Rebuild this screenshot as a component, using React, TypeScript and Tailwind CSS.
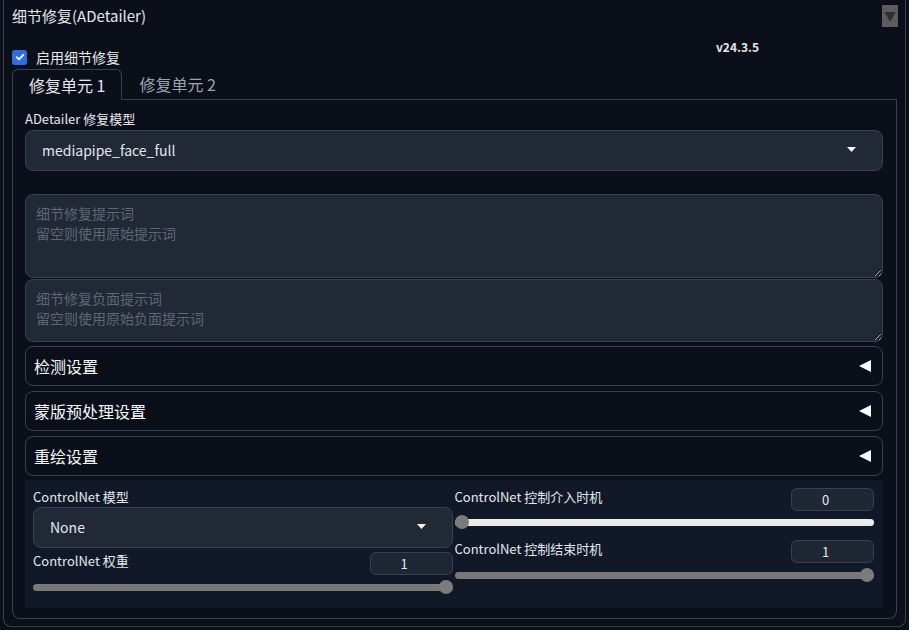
const font = "font-['Noto_Sans_CJK_SC','Noto_Sans',sans-serif]";

function Caret() {
  return (
    <svg width="9" height="5" viewBox="0 0 9 5" className="shrink-0">
      <polygon points="0,0 9,0 4.5,5" fill="#f3f4f6" />
    </svg>
  );
}

function LeftTriangle() {
  return (
    <svg width="12" height="12" viewBox="0 0 12 12" className="shrink-0">
      <polygon points="12,0 12,12 0,6" fill="#f9fafb" />
    </svg>
  );
}

function Select({ value, caretRight }: { value: string; caretRight: string }) {
  return (
    <div className="flex h-[41px] items-center justify-between rounded-lg border border-[#374151] bg-[#212836] pb-[2px] pl-[16px]">
      <span className="text-[14px] leading-[18px] text-[#e5e7eb]">{value}</span>
      <span className={caretRight}>
        <Caret />
      </span>
    </div>
  );
}

function NumberBox({ value }: { value: string }) {
  return (
    <div className="flex h-[23px] w-[83px] items-center justify-center rounded-md border border-[#374151] bg-[#1f2634] pr-[14px] text-[13px] text-[#e5e7eb]">
      {value}
    </div>
  );
}

function Slider({ value, light }: { value: number; light?: boolean }) {
  return (
    <div className="relative h-[14px] w-full">
      <div
        className={`absolute left-0 right-0 top-[3.5px] h-[7px] rounded-full ${
          light ? "bg-[#ececec]" : "bg-[#787878]"
        }`}
      />
      <div
        className="absolute top-0 h-[14px] w-[14px] rounded-full bg-[#7b7b7b]"
        style={{ left: `calc(${value * 100}% - ${value * 14}px)` }}
      />
    </div>
  );
}

function Accordion({ title }: { title: string }) {
  return (
    <div className="flex h-[40px] items-center justify-between rounded-lg border border-[#374151] pl-[8px] pr-[11px]">
      <span className="text-[16px] font-normal text-[#f9fafb]">{title}</span>
      <LeftTriangle />
    </div>
  );
}

export default function App() {
  return (
    <div className={`h-[630px] w-[909px] overflow-hidden bg-[#0b0f19] ${font}`}>
      <div className="mx-[3px] h-[627px] rounded-b-lg border-x border-b border-[#374151] pt-[5px]">
        <div className="flex items-start justify-between pl-[8px] pr-[7px]">
          <span className="mt-[1px] text-[15px] leading-[20px] text-[#e5e7eb]">
            细节修复(ADetailer)
          </span>
          <div className="flex h-[22px] w-[16px] items-center justify-center bg-[#5c5c5c] text-[12px] text-[#2f2f2f]">
            ▼
          </div>
        </div>

        <div className="mt-[13px] flex items-start pl-[8px]">
          <label className="mt-[9px] flex items-center gap-[9px]">
            <span className="flex h-[15px] w-[15px] items-center justify-center rounded-[3px] bg-[#2f6de1]">
              <svg width="10" height="10" viewBox="0 0 10 10">
                <path d="M1.8 5.2 L4 7.3 L8.3 2.8" stroke="#fff" strokeWidth="1.8" fill="none" strokeLinecap="round" strokeLinejoin="round" />
              </svg>
            </span>
            <span className="text-[14px] leading-[16px] text-[#e5e7eb]">启用细节修复</span>
          </label>
          <span className="ml-auto mr-[146px] text-[12px] font-bold leading-[14px] text-[#e5e7eb]">
            v24.3.5
          </span>
        </div>

        <div className="mx-[8px] mt-[4px] flex h-[31px]">
          <div className="flex items-center rounded-t-md border border-b-0 border-[#374151] px-[16px] text-[16px] text-[#e5e7eb]">
            修复单元 1
          </div>
          <div className="flex flex-1 items-center border-b border-[#374151] pl-[17px] text-[16px] text-[#9ca3af]">
            修复单元 2
          </div>
        </div>

        <div className="mx-[8px] rounded-b-lg border-x border-b border-[#374151] pb-[10px] pl-[12px] pr-[13px] pt-[11px]">
          <div className="text-[13px] leading-[16px] text-[#e5e7eb]">ADetailer 修复模型</div>
          <div className="mt-[3px]">
            <Select value="mediapipe_face_full" caretRight="mr-[26px]" />
          </div>

          <textarea
            className="mt-[23px] block h-[84px] w-full resize-y rounded-lg border border-[#374151] bg-[#212836] px-[10px] pb-[9px] pt-[8px] text-[14px] leading-[20px] text-[#e5e7eb] outline-none placeholder:text-[#5f6674]"
            placeholder={"细节修复提示词\n留空则使用原始提示词"}
          />
          <textarea
            className="mt-[1px] block h-[63px] w-full resize-y rounded-lg border border-[#374151] bg-[#212836] px-[10px] pb-[9px] pt-[8px] text-[14px] leading-[20px] text-[#e5e7eb] outline-none placeholder:text-[#5f6674]"
            placeholder={"细节修复负面提示词\n留空则使用原始负面提示词"}
          />

          <div className="mt-[4px] flex flex-col gap-[5px]">
            <Accordion title="检测设置" />
            <Accordion title="蒙版预处理设置" />
            <Accordion title="重绘设置" />
          </div>

          <div className="mt-[4px] grid h-[128px] grid-cols-2 gap-[2px] bg-[#111827] pl-[8px] pr-[9px] pt-[8px]">
            <div className="flex flex-col">
              <div className="text-[13px] leading-[17px] text-[#e5e7eb]">ControlNet 模型</div>
              <div className="mt-[2px]">
                <Select value="None" caretRight="mr-[26px]" />
              </div>
              <div className="mt-[4px] flex items-start justify-between">
                <span className="text-[13px] leading-[17px] text-[#e5e7eb]">ControlNet 权重</span>
                <NumberBox value="1" />
              </div>
              <div className="mt-[5px]">
                <Slider value={1} />
              </div>
            </div>

            <div className="flex flex-col">
              <div className="flex items-start justify-between">
                <span className="text-[13px] leading-[17px] text-[#e5e7eb]">ControlNet 控制介入时机</span>
                <NumberBox value="0" />
              </div>
              <div className="mt-[4px]">
                <Slider value={0} light />
              </div>
              <div className="mt-[11px] flex items-start justify-between">
                <span className="text-[13px] leading-[17px] text-[#e5e7eb]">ControlNet 控制结束时机</span>
                <NumberBox value="1" />
              </div>
              <div className="mt-[5px]">
                <Slider value={1} />
              </div>
            </div>
          </div>
        </div>
      </div>
    </div>
  );
}
